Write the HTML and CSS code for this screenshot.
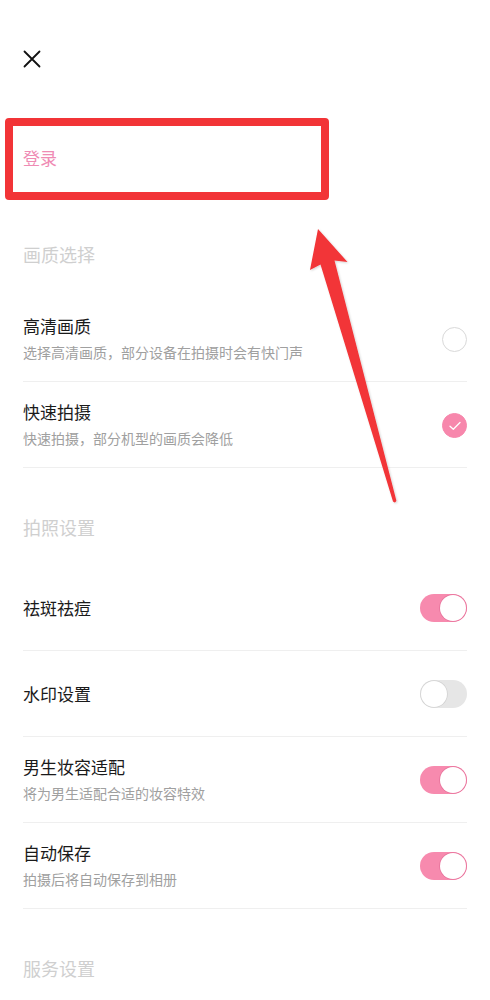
FILE: index.html
```html
<!DOCTYPE html>
<html lang="zh">
<head>
<meta charset="utf-8">
<link rel="stylesheet" href="styles.css">
</head>
<body>
<div class="page">
  <div class="topbar">
    <svg class="close" width="18" height="18" viewBox="0 0 18 18">
      <path d="M1.5 1.5 L16.5 16.5 M16.5 1.5 L1.5 16.5" stroke="#111" stroke-width="1.8" fill="none" stroke-linecap="round"/>
    </svg>
  </div>

  <div class="login-row">登录</div>

  <div class="section-title first">画质选择</div>

  <div class="row">
    <div class="texts">
      <div class="title">高清画质</div>
      <div class="sub">选择高清画质，部分设备在拍摄时会有快门声</div>
    </div>
    <span class="radio"></span>
  </div>
  <div class="row">
    <div class="texts">
      <div class="title">快速拍摄</div>
      <div class="sub">快速拍摄，部分机型的画质会降低</div>
    </div>
    <span class="radio checked">
      <svg width="12" height="10" viewBox="0 0 12 10"><path d="M1 5.2 L4.3 8.3 L11 1.5" stroke="#fff" stroke-width="1.3" fill="none" stroke-linecap="round" stroke-linejoin="round"/></svg>
    </span>
  </div>

  <div class="section-title">拍照设置</div>

  <div class="row">
    <div class="texts"><div class="title">祛斑祛痘</div></div>
    <span class="toggle on"><span class="knob"></span></span>
  </div>
  <div class="row">
    <div class="texts"><div class="title">水印设置</div></div>
    <span class="toggle"><span class="knob"></span></span>
  </div>
  <div class="row">
    <div class="texts">
      <div class="title">男生妆容适配</div>
      <div class="sub">将为男生适配合适的妆容特效</div>
    </div>
    <span class="toggle on"><span class="knob"></span></span>
  </div>
  <div class="row">
    <div class="texts">
      <div class="title">自动保存</div>
      <div class="sub">拍摄后将自动保存到相册</div>
    </div>
    <span class="toggle on"><span class="knob"></span></span>
  </div>

  <div class="section-title">服务设置</div>

  <div class="highlight-box"></div>
  <svg class="arrow" width="490" height="1000" viewBox="0 0 490 1000">
    <defs>
      <filter id="sh" x="-20%" y="-20%" width="140%" height="140%">
        <feDropShadow dx="1" dy="1" stdDeviation="1.2" flood-color="#000" flood-opacity="0.18"/>
      </filter>
    </defs>
    <path filter="url(#sh)" fill="#f23437" d="M318 229 L347.5 262 L334.5 260.5 L396.4 500.8 Q395 503.5 393 501.6 L320.5 264.5 L310 270 Z"/>
  </svg>
</div>
</body>
</html>
```

FILE: styles.css
```css
* { box-sizing: border-box; }
html, body { margin: 0; padding: 0; background: #fff; }
body {
  font-family: "Noto Sans CJK SC", "Noto Sans", sans-serif;
  width: 490px;
  height: 1000px;
  overflow: hidden;
}
.page {
  position: relative;
  padding: 0 23px;
}
.topbar {
  height: 114px;
  display: flex;
  align-items: flex-start;
  padding-top: 50px;
}
.close { display: block; margin-left: 0; }
.login-row {
  height: 86px;
  display: flex;
  align-items: center;
  font-size: 17px;
  color: #ef8bb4;
}
.section-title {
  height: 97px;
  padding-top: 48px;
  font-size: 18px;
  line-height: 22px;
  color: #cfcfcf;
}
.section-title.first {
  height: 96px;
  padding-top: 43px;
}
.row {
  height: 86px;
  border-bottom: 1px solid #efefef;
  display: flex;
  align-items: center;
  justify-content: space-between;
}
.texts {
  display: flex;
  flex-direction: column;
  gap: 5px;
}
.title {
  font-size: 17px;
  line-height: 22px;
  color: #1a1a1a;
}
.sub {
  font-size: 14px;
  line-height: 20px;
  color: #a0a0a0;
}
.radio {
  width: 25px;
  height: 25px;
  border-radius: 50%;
  border: 1px solid #d9d9d9;
  display: flex;
  align-items: center;
  justify-content: center;
  margin-top: 2px;
}
.radio.checked {
  background: #f787ac;
  border-color: #f787ac;
}
.toggle {
  width: 47px;
  height: 28px;
  border-radius: 14px;
  background: #e6e6e6;
  position: relative;
  display: block;
}
.toggle .knob {
  position: absolute;
  top: 1px;
  left: 1px;
  width: 26px;
  height: 26px;
  border-radius: 50%;
  background: #fff;
  box-shadow: 0 0 0 0.8px #d2d2d2;
}
.toggle.on { background: #f78aae; }
.toggle.on .knob {
  left: 20px;
  box-shadow: 0 0 0 0.8px #e7729b;
}
.highlight-box {
  position: absolute;
  left: 5px;
  top: 118px;
  width: 324px;
  height: 82px;
  border: 8px solid #f23437;
  border-radius: 4px;
  pointer-events: none;
}
.arrow {
  position: absolute;
  left: 0;
  top: 0;
  pointer-events: none;
}
```
